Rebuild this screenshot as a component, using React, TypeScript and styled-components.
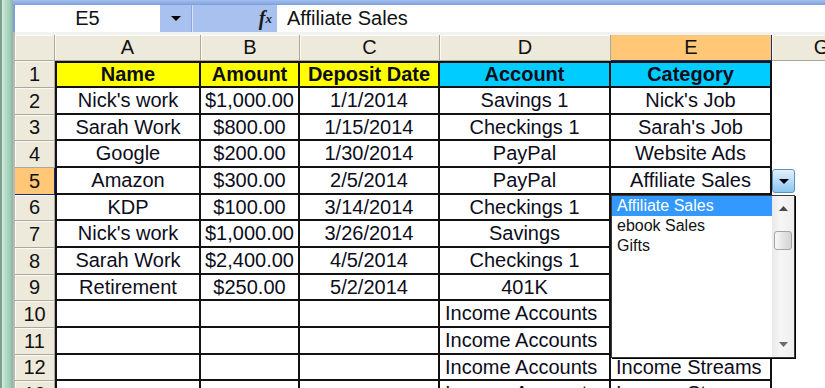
import styled, { createGlobalStyle } from 'styled-components'

const GlobalStyle = createGlobalStyle`
  html, body {
    margin: 0;
    padding: 0;
    background: #fff;
    overflow: hidden;
  }
  body {
    font-family: 'Liberation Sans', Arial, sans-serif;
  }
`

const colWidths = [40, 146, 99, 140, 171, 161, 100]
const rowHeights = [27, 27, 26, 27, 27, 26, 27, 27, 26, 27, 27, 26, 27]
const colLetters = ['A', 'B', 'C', 'D', 'E', 'G']

const headers = ['Name', 'Amount', 'Deposit Date', 'Account', 'Category']
const rows: string[][] = [
  ["Nick's work", '$1,000.00', '1/1/2014', 'Savings 1', "Nick's Job"],
  ['Sarah Work', '$800.00', '1/15/2014', 'Checkings 1', "Sarah's Job"],
  ['Google', '$200.00', '1/30/2014', 'PayPal', 'Website Ads'],
  ['Amazon', '$300.00', '2/5/2014', 'PayPal', 'Affiliate Sales'],
  ['KDP', '$100.00', '3/14/2014', 'Checkings 1', ''],
  ["Nick's work", '$1,000.00', '3/26/2014', 'Savings', ''],
  ['Sarah Work', '$2,400.00', '4/5/2014', 'Checkings 1', ''],
  ['Retirement', '$250.00', '5/2/2014', '401K', ''],
  ['', '', '', 'Income Accounts', ''],
  ['', '', '', 'Income Accounts', ''],
  ['', '', '', 'Income Accounts', 'Income Streams'],
  ['', '', '', 'Income Accounts', 'Income Streams']
]
const listItems = ['Affiliate Sales', 'ebook Sales', 'Gifts']

const Window = styled.div`
  display: flex;
  width: 825px;
  height: 388px;
  overflow: hidden;
  background: #fff;
`

const SideStrip = styled.div`
  flex: 0 0 13px;
  background: linear-gradient(
    to right,
    #7e9d8d 0,
    #7e9d8d 2px,
    #d6ede1 2px,
    #b8ddca 5px,
    #9fccb5 10px,
    #86b59d 13px
  );
`

const Main = styled.div`
  flex: 1;
  display: flex;
  flex-direction: column;
  min-width: 0;
  min-height: 0;
`

const TitleEdge = styled.div`
  flex: none;
  height: 5px;
  background: linear-gradient(#a3bfec, #7c9fe0);
`

const FormulaBar = styled.div`
  flex: none;
  display: flex;
  height: 27px;
  border-left: 2px solid #7c9fe0;
  background: #a8c1ef;
`

const NameBox = styled.div`
  width: 145px;
  display: flex;
  align-items: center;
  justify-content: center;
  background: #fff;
  font-size: 20px;
  color: #111;
`

const NameArrow = styled.div`
  width: 31px;
  display: flex;
  align-items: center;
  justify-content: center;
  border-right: 1px solid #8aa6dc;
`

const BarDivider = styled.div`
  width: 1px;
  background: #d6e2f8;
`

const FxBox = styled.div`
  width: 84px;
  display: flex;
  align-items: center;
  justify-content: flex-end;
  padding-right: 5px;
  box-sizing: border-box;
  font-family: 'Liberation Serif', 'Times New Roman', serif;
  font-style: italic;
  font-weight: bold;
  font-size: 20px;
  color: #1a1a1a;

  sub {
    font-size: 13px;
    vertical-align: -2px;
  }
`

const FormulaInput = styled.div`
  flex: 1;
  display: flex;
  align-items: center;
  padding-left: 10px;
  background: #fff;
  font-size: 20px;
  color: #111;
`

const BarGap = styled.div`
  flex: none;
  height: 3px;
  background: #f2f2f2;
  border-left: 2px solid #b9b9b9;
`

const SheetWrap = styled.div`
  position: relative;
  flex: 1;
  min-height: 0;
  overflow: hidden;
  border-left: 2px solid #b9b9b9;
`

const Sheet = styled.div`
  display: grid;
  grid-template-columns: ${colWidths.map((w) => `${w}px`).join(' ')};
  grid-template-rows: 26px ${rowHeights.map((h) => `${h}px`).join(' ')};
`

const HeadCell = styled.div<{ $active?: boolean }>`
  display: flex;
  align-items: center;
  justify-content: center;
  box-sizing: border-box;
  font-size: 20px;
  color: #111;
  background: ${({ $active }) => ($active ? '#ffc776' : '#eeeadb')};
  border-right: 1px solid ${({ $active }) => ($active ? '#1c2a7a' : '#aca899')};
  border-bottom: 1px solid ${({ $active }) => ($active ? '#1c2a7a' : '#aca899')};
  box-shadow: ${({ $active }) => ($active ? 'none' : 'inset 1px 1px 0 #fbfaf6')};
  overflow: hidden;
  white-space: nowrap;
`

const Cell = styled.div<{ $fill?: string; $bold?: boolean; $left?: boolean; $first?: boolean; $top?: boolean }>`
  display: flex;
  align-items: center;
  justify-content: ${({ $left }) => ($left ? 'flex-start' : 'center')};
  padding-left: ${({ $left }) => ($left ? '5px' : '0')};
  box-sizing: border-box;
  background: ${({ $fill }) => $fill || '#fff'};
  border-right: 2px solid #121212;
  border-bottom: 2px solid #121212;
  border-left: ${({ $first }) => ($first ? '2px solid #121212' : 'none')};
  border-top: ${({ $top }) => ($top ? '2px solid #121212' : 'none')};
  font-size: 20px;
  font-weight: ${({ $bold }) => ($bold ? 'bold' : 'normal')};
  color: #0d0d1c;
  white-space: nowrap;
  overflow: hidden;
`

const EmptyCell = styled.div`
  background: #fff;
`

const DropButton = styled.div`
  position: absolute;
  left: 757px;
  top: 134px;
  width: 23px;
  height: 24px;
  box-sizing: border-box;
  display: flex;
  align-items: center;
  justify-content: center;
  border: 1px solid #5f8fbf;
  border-radius: 3px;
  background: linear-gradient(#e3f0fc, #b6dcf6 50%, #8cc6ee);
`

const ListBox = styled.div`
  position: absolute;
  left: 596px;
  top: 160px;
  width: 184px;
  height: 163px;
  box-sizing: border-box;
  display: flex;
  background: #fff;
  border: 1px solid #3a3a3a;
  box-shadow: 1px 1px 0 #000;
`

const ListItems = styled.div`
  flex: 1;
  display: flex;
  flex-direction: column;
`

const ListItem = styled.div<{ $selected?: boolean }>`
  height: 20px;
  line-height: 20px;
  padding-left: 5px;
  font-size: 16px;
  color: ${({ $selected }) => ($selected ? '#fff' : '#111')};
  background: ${({ $selected }) => ($selected ? '#3399ff' : 'transparent')};
  white-space: nowrap;
`

const ScrollBar = styled.div`
  flex: 0 0 22px;
  display: flex;
  flex-direction: column;
  background: linear-gradient(to right, #e9e9e9, #f6f6f6 40%, #eeeeee);
`

const ScrollButton = styled.div`
  height: 25px;
  display: flex;
  align-items: center;
  justify-content: center;
`

const ScrollTrack = styled.div`
  flex: 1;
  padding: 10px 2px 0;
`

const Thumb = styled.div`
  height: 19px;
  box-sizing: border-box;
  border: 1px solid #a3a3a3;
  border-radius: 3px;
  background: linear-gradient(to right, #f8f8f8, #e2e2e2 55%, #d4d4d4);
`

const Triangle = ({ down = true, color = '#000', w = 10, h = 5 }: { down?: boolean; color?: string; w?: number; h?: number }) => (
  <svg width={w} height={h} viewBox={`0 0 ${w} ${h}`}>
    <polygon points={down ? `0,0 ${w},0 ${w / 2},${h}` : `0,${h} ${w},${h} ${w / 2},0`} fill={color} />
  </svg>
)

const App = () => {
  return (
    <>
      <GlobalStyle />
      <Window>
        <SideStrip />
        <Main>
          <TitleEdge />
          <FormulaBar>
            <NameBox>E5</NameBox>
            <NameArrow>
              <Triangle />
            </NameArrow>
            <BarDivider />
            <FxBox>
              f<sub>x</sub>
            </FxBox>
            <FormulaInput>Affiliate Sales</FormulaInput>
          </FormulaBar>
          <BarGap />
          <SheetWrap>
            <Sheet>
              <HeadCell />
              {colLetters.map((l) => (
                <HeadCell key={l} $active={l === 'E'}>
                  {l}
                </HeadCell>
              ))}

              <HeadCell>1</HeadCell>
              {headers.map((h, c) => (
                <Cell key={h} $bold $top $first={c === 0} $fill={c < 3 ? '#ffff00' : '#00ccff'}>
                  {h}
                </Cell>
              ))}
              <EmptyCell />

              {rows.map((row, i) => {
                const n = i + 2
                return [
                  <HeadCell key={`h${n}`} $active={n === 5}>
                    {n}
                  </HeadCell>,
                  ...row.map((text, c) => (
                    <Cell key={`${n}-${c}`} $first={c === 0} $left={n >= 10}>
                      {text}
                    </Cell>
                  )),
                  <EmptyCell key={`g${n}`} />
                ]
              })}
            </Sheet>

            <DropButton>
              <Triangle />
            </DropButton>

            <ListBox>
              <ListItems>
                {listItems.map((item, i) => (
                  <ListItem key={item} $selected={i === 0}>
                    {item}
                  </ListItem>
                ))}
              </ListItems>
              <ScrollBar>
                <ScrollButton>
                  <Triangle down={false} color="#4a4a4a" w={9} h={5} />
                </ScrollButton>
                <ScrollTrack>
                  <Thumb />
                </ScrollTrack>
                <ScrollButton>
                  <Triangle color="#6a6a6a" w={9} h={5} />
                </ScrollButton>
              </ScrollBar>
            </ListBox>
          </SheetWrap>
        </Main>
      </Window>
    </>
  )
}

export default App
